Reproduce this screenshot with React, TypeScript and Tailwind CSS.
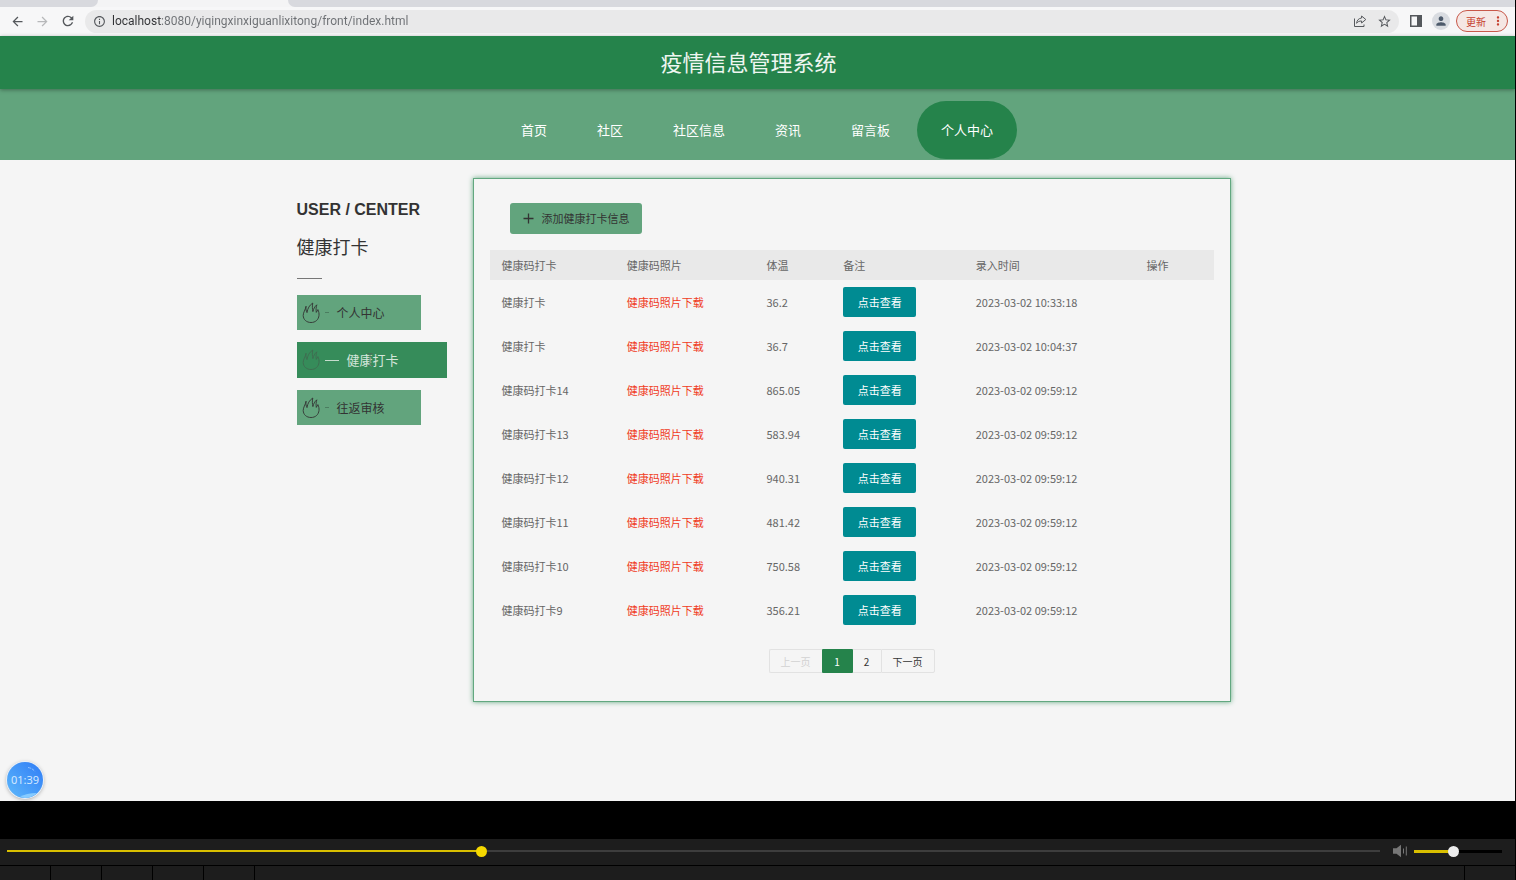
import { useState } from "react";
import {
  MdArrowBack,
  MdArrowForward,
  MdInfoOutline,
  MdMoreVert,
  MdPerson,
  MdRefresh,
  MdStarBorder,
} from "react-icons/md";

const NAV = ["首页", "社区", "社区信息", "资讯", "留言板", "个人中心"];
const MENU = ["个人中心", "健康打卡", "往返审核"];

const ROWS = [
  { name: "健康打卡", temp: "36.2", time: "2023-03-02 10:33:18" },
  { name: "健康打卡", temp: "36.7", time: "2023-03-02 10:04:37" },
  { name: "健康码打卡14", temp: "865.05", time: "2023-03-02 09:59:12" },
  { name: "健康码打卡13", temp: "583.94", time: "2023-03-02 09:59:12" },
  { name: "健康码打卡12", temp: "940.31", time: "2023-03-02 09:59:12" },
  { name: "健康码打卡11", temp: "481.42", time: "2023-03-02 09:59:12" },
  { name: "健康码打卡10", temp: "750.58", time: "2023-03-02 09:59:12" },
  { name: "健康码打卡9", temp: "356.21", time: "2023-03-02 09:59:12" },
];

function ShareIcon() {
  return (
    <svg viewBox="0 0 14 14" className="h-[14px] w-[14px]" fill="none" stroke="currentColor" strokeWidth="1" strokeLinejoin="round">
      <path d="M1.500 4.500v8H11V10.500" />
      <path d="M8.600 2 12.800 5.500 8.600 9V7C6.300 6.900 4.800 7.700 3.600 9.300 3.900 6.400 5.500 4.300 8.600 4Z" />
    </svg>
  );
}

function SidePanelIcon() {
  return (
    <svg viewBox="0 0 12 12" className="h-3 w-3">
      <rect x="0.75" y="0.75" width="10.500" height="10.500" fill="none" stroke="currentColor" strokeWidth="1.500" />
      <rect x="7" y="1" width="4.500" height="10" fill="currentColor" />
    </svg>
  );
}

function FlameIcon() {
  return (
    <svg viewBox="0 0 18 22" className="h-[22px] w-[18px] shrink-0" fill="none" stroke="currentColor" strokeWidth="0.9" strokeLinejoin="round" strokeLinecap="round">
      <path d="M4 4.600C3.600 7 4.200 9 5 10.600 5.600 6.500 7.400 3.200 10.800 1 10.200 3.800 10.200 6.600 10.900 9.600 11.500 7 12.600 4.600 14.800 2.800 14 5.400 13.900 7.800 14.300 10.400L15.900 7.600C16.800 9.700 17.200 11.500 17 13.400 16.500 17.800 13.400 20.500 9 20.500 4.500 20.500 1.300 17.600 1.200 13.500 1.200 10.300 3.400 8 4 4.600Z" />
    </svg>
  );
}

function SpeakerIcon() {
  return (
    <svg viewBox="0 0 16 14" className="h-[14px] w-4">
      <path d="M1 4.300h3.500L9 .8v12.400L4.500 9.700H1Z" fill="#777" />
      <path d="M11.500 4.500v5M14.300 2.500v9" stroke="#777" strokeWidth="1" />
    </svg>
  );
}

function BrowserBar() {
  return (
    <div>
      <div className="flex h-[7px] bg-[#f4f4f5]">
        <div className="w-[98px] rounded-br-lg bg-[#d8d9de]" />
        <div className="w-[190px]" />
        <div className="flex-1 rounded-bl-lg bg-[#d8d9de]" />
      </div>
      <div className="flex h-[29px] items-center bg-[#f7f7f8] pr-[7px] pb-px pl-[10px] text-[#55585c]">
        <button aria-label="后退" className="w-[25px]">
          <MdArrowBack size={15} />
        </button>
        <button aria-label="前进" className="w-[25px] text-[#b7b8ba]">
          <MdArrowForward size={15} />
        </button>
        <button aria-label="刷新" className="w-[25px]">
          <MdRefresh size={16} />
        </button>
        <div className="flex h-[23px] flex-1 items-center rounded-full bg-[#e9e9ea] pr-[7px] pl-[8px]">
          <MdInfoOutline size={13} />
          <input
            aria-label="地址"
            defaultValue="localhost:8080/yiqingxinxiguanlixitong/front/index.html"
            className="ml-[6px] flex-1 bg-[linear-gradient(90deg,#303134_49px,#6c6f73_49px)] bg-clip-text font-['Roboto',sans-serif] text-[12px] text-transparent outline-none"
          />
          <button aria-label="分享" className="mr-[10px]">
            <ShareIcon />
          </button>
          <button aria-label="收藏">
            <MdStarBorder size={15} />
          </button>
        </div>
        <button aria-label="侧边栏" className="ml-[11px]">
          <SidePanelIcon />
        </button>
        <button aria-label="用户" className="ml-[10px] flex h-[18px] w-[18px] items-center justify-center rounded-full bg-[#d9dce1] text-[#4d5a6b]">
          <MdPerson size={14} />
        </button>
        <button className="ml-[6px] flex h-[22px] items-center rounded-full border border-[#c8584a] bg-[#f5e7e4] pr-[2px] pl-[9px] text-[10px] text-[#c5402f]">
          更新
          <MdMoreVert size={14} className="ml-[5px]" />
        </button>
      </div>
    </div>
  );
}

function Sidebar() {
  const active = "健康打卡";
  return (
    <aside className="w-[150px] shrink-0 pt-5">
      <h2 className="font-['Liberation_Sans',Arial,sans-serif] text-[16px] leading-6 font-bold text-[#333]">USER / CENTER</h2>
      <h3 className="mt-[10px] text-[18px] leading-7 text-[#333]">健康打卡</h3>
      <div className="mt-[18px] mb-[16px] h-px w-[25px] bg-[#777]" />
      <ul className="flex flex-col gap-3">
        {MENU.map((item) =>
          item === active ? (
            <li key={item}>
              <a href="#checkin" className="relative flex h-9 w-full items-center bg-[#368c5a] pl-[5px] text-[13px] text-[#d5e6db]">
                <span className="text-[#3f6b50]">
                  <FlameIcon />
                </span>
                <span className="ml-[5px] h-px w-[14px] bg-[#c5dccd]" />
                <span className="ml-[8px]">{item}</span>
                <svg viewBox="0 0 6 13" className="absolute top-[11px] left-[70px] h-[13px] w-[6px]" fill="none" stroke="#4f6a59" strokeWidth="0.9">
                  <path d="M.5.500h2l.5.500.5-.5h2M3 1v11M.5 12.500h2l.5-.5.5.500h2" />
                </svg>
              </a>
            </li>
          ) : (
            <li key={item}>
              <a href="#menu" className="flex h-[35px] w-[124px] items-center bg-[#62a47d] pl-[5px] text-[12px] text-[#333]">
                <FlameIcon />
                <span className="ml-[5px] h-px w-[4px] bg-[#4b7d60]" />
                <span className="ml-[8px]">{item}</span>
              </a>
            </li>
          ),
        )}
      </ul>
    </aside>
  );
}

function CheckinPanel() {
  return (
    <section className="min-w-0 flex-1 border border-[#62a880] px-4 pt-6 pb-7 shadow-[0_0_5px_#62a880]">
      <button className="ml-5 flex h-[31px] items-center rounded-[3px] bg-[#62a47d] pr-[12px] pl-[13px] text-[11px] text-[#333]">
        <svg viewBox="0 0 11 11" className="mr-2 h-[11px] w-[11px]" stroke="#333" strokeWidth="1.300">
          <path d="M5.500.500v10M.5 5.500h10" />
        </svg>
        添加健康打卡信息
      </button>
      <table className="mt-4 w-full table-fixed text-left text-[11px] text-[#666]">
        <colgroup>
          <col className="w-[17.3%]" />
          <col className="w-[19.3%]" />
          <col className="w-[10.6%]" />
          <col className="w-[18.3%]" />
          <col className="w-[23.6%]" />
          <col />
        </colgroup>
        <thead>
          <tr className="h-[30px] bg-[#e9e9e9]">
            {["健康码打卡", "健康码照片", "体温", "备注", "录入时间", "操作"].map((title) => (
              <th key={title} className="px-3 font-normal">
                {title}
              </th>
            ))}
          </tr>
        </thead>
        <tbody>
          {ROWS.map((row, index) => (
            <tr key={index} className="h-[44px]">
              <td className="px-3">{row.name}</td>
              <td className="px-3">
                <a href="#download" className="text-[#f03c1e]">
                  健康码照片下载
                </a>
              </td>
              <td className="px-3">{row.temp}</td>
              <td className="px-3">
                <button className="block h-[30px] w-[73px] rounded-[2px] bg-[#008b92] text-white">点击查看</button>
              </td>
              <td className="px-3 whitespace-nowrap">{row.time}</td>
              <td />
            </tr>
          ))}
        </tbody>
      </table>
      <nav aria-label="分页" className="mt-[17px] flex justify-center text-[10px] text-[#333]">
        <button disabled className="h-6 rounded-l-[2px] border border-r-0 border-[#e2e2e2] px-[11px] text-[#d2d2d2]">
          上一页
        </button>
        <button className="h-6 w-[31px] rounded-[1px] bg-[#25834b] text-white">1</button>
        <button className="h-6 w-[28px] border-y border-[#e2e2e2]">2</button>
        <button className="h-6 rounded-r-[2px] border border-[#e2e2e2] px-[11px]">下一页</button>
      </nav>
    </section>
  );
}

function Player() {
  const [position, setPosition] = useState(34.4);
  const [volume, setVolume] = useState(44);
  return (
    <footer className="bg-black">
      <div className="mt-[38px] flex h-[26px] items-center bg-[#1d1d1d] pr-[13px] pb-0.5 pl-[7px]">
        <input
          type="range"
          aria-label="播放进度"
          min={0}
          max={100}
          step={0.1}
          value={position}
          onChange={(e) => setPosition(Number(e.target.value))}
          style={{ backgroundImage: `linear-gradient(90deg, #d9bf00 ${position}%, #3d3d3d ${position}%)` }}
          className="h-[2px] min-w-0 flex-1 appearance-none outline-none [&::-webkit-slider-thumb]:h-[11px] [&::-webkit-slider-thumb]:w-[11px] [&::-webkit-slider-thumb]:appearance-none [&::-webkit-slider-thumb]:rounded-full [&::-webkit-slider-thumb]:bg-[#f5d800]"
        />
        <button aria-label="静音" className="mr-[6px] ml-[12px]">
          <SpeakerIcon />
        </button>
        <input
          type="range"
          aria-label="音量"
          min={0}
          max={100}
          value={volume}
          onChange={(e) => setVolume(Number(e.target.value))}
          style={{ backgroundImage: `linear-gradient(90deg, #d9bf00 ${volume}%, #000 ${volume}%)` }}
          className="h-[3px] w-[88px] appearance-none outline-none [&::-webkit-slider-thumb]:h-[11px] [&::-webkit-slider-thumb]:w-[11px] [&::-webkit-slider-thumb]:appearance-none [&::-webkit-slider-thumb]:rounded-full [&::-webkit-slider-thumb]:bg-[#ececec]"
        />
      </div>
      <div className="mt-px flex h-[14px] gap-px">
        <div className="w-[50px] bg-[#1d1d1d]" />
        <div className="w-[50px] bg-[#1d1d1d]" />
        <div className="w-[50px] bg-[#1d1d1d]" />
        <div className="w-[50px] bg-[#1d1d1d]" />
        <div className="w-[50px] bg-[#1d1d1d]" />
        <div className="flex-1 bg-[#1d1d1d]" />
        <div className="w-[50px] bg-[#1d1d1d]" />
      </div>
    </footer>
  );
}

export default function App() {
  return (
    <div className="flex min-h-screen flex-col border-r border-black bg-[#f5f5f5] font-['Noto_Sans_CJK_SC',sans-serif]">
      <BrowserBar />
      <header className="relative flex h-[53px] items-center justify-center bg-[#25834b] pr-[18px] pb-0.5 shadow-[0_1px_4px_rgba(0,0,0,0.35)]">
        <h1 className="text-[22px] text-[#eef6f0]">疫情信息管理系统</h1>
      </header>
      <nav className="flex justify-center gap-1 bg-[#62a47d] pt-3 pb-px text-[13px] text-white">
        {NAV.map((item) => (
          <a
            key={item}
            href="#nav"
            className={
              item === "个人中心"
                ? "flex h-[58px] items-center rounded-[29px] bg-[#25834b] px-6"
                : "flex h-[58px] items-center px-[23px]"
            }
          >
            {item}
          </a>
        ))}
      </nav>
      <main className="relative flex-1">
        <div className="mx-auto flex max-w-[946px] items-start gap-[26px] pt-[18px] pl-3">
          <Sidebar />
          <CheckinPanel />
        </div>
        <div className="absolute bottom-[3px] left-[7px] flex h-9 w-9 items-center justify-center overflow-hidden rounded-full bg-[linear-gradient(45deg,#5db8fb,#2f7cf6)] font-['Noto_Sans',sans-serif] text-[11px] text-[#d3e8ff] shadow-[0_0_0_1px_#e8f1fb,0_1px_4px_rgba(0,0,0,0.4)]">
          <svg viewBox="0 0 36 36" className="absolute inset-0 h-9 w-9" fill="none">
            <path d="M13 35q6-4 17-4-5 5-12 5z" fill="#86cbff" />
            <path d="M21 5.500q4 .5 7 4" stroke="#8fc0ff" strokeWidth="1" strokeDasharray="3 1" />
          </svg>
          <span className="relative">01:39</span>
        </div>
      </main>
      <Player />
    </div>
  );
}
